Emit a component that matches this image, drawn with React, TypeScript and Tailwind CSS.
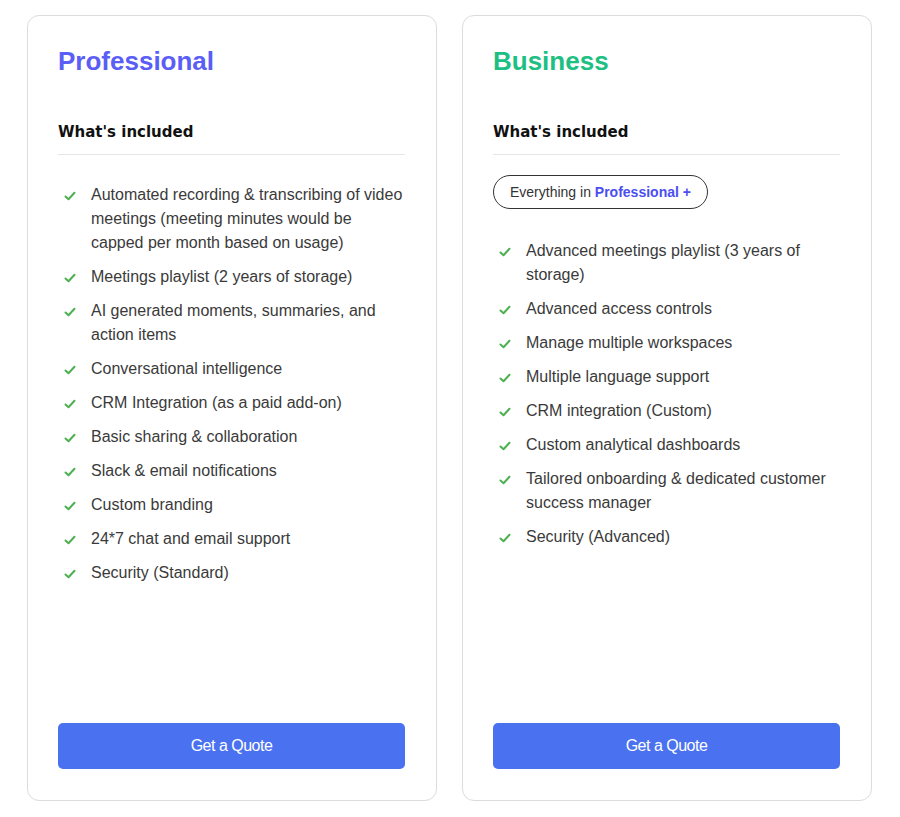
const proFeatures = [
  "Automated recording & transcribing of video meetings (meeting minutes would be capped per month based on usage)",
  "Meetings playlist (2 years of storage)",
  "AI generated moments, summaries, and action items",
  "Conversational intelligence",
  "CRM Integration (as a paid add-on)",
  "Basic sharing & collaboration",
  "Slack & email notifications",
  "Custom branding",
  "24*7 chat and email support",
  "Security (Standard)",
];

const bizFeatures = [
  "Advanced meetings playlist (3 years of storage)",
  "Advanced access controls",
  "Manage multiple workspaces",
  "Multiple language support",
  "CRM integration (Custom)",
  "Custom analytical dashboards",
  "Tailored onboarding & dedicated customer success manager",
  "Security (Advanced)",
];

function Check() {
  return (
    <svg width="12" height="10" viewBox="0 0 12 10" className="mt-[8px] shrink-0">
      <path d="M1.5 5.5 L4.5 8.2 L10.5 1.8" fill="none" stroke="#4caf50" strokeWidth="2" strokeLinecap="round" strokeLinejoin="round" />
    </svg>
  );
}

function FeatureList({ items, className }: { items: string[]; className?: string }) {
  return (
    <ul className={`flex flex-col gap-[10px] ${className ?? ""}`}>
      {items.map((t) => (
        <li key={t} className="flex gap-[15px] pl-[6px]">
          <Check />
          <span className="text-[16px] leading-[24px] text-[#3a3a3a]">{t}</span>
        </li>
      ))}
    </ul>
  );
}

function PlanCard({
  title,
  titleColor,
  children,
}: {
  title: string;
  titleColor: string;
  children: React.ReactNode;
}) {
  return (
    <div className="flex flex-col rounded-[12px] border border-[#dcdcdc] bg-white pl-[30px] pr-[31px] pt-[29px] pb-[31px]">
      <h2 className={`text-[26px] leading-[32px] font-bold ${titleColor}`}>{title}</h2>
      <div className="mt-[45px] border-b border-[#e6e6e6] pb-[12px]">
        <h3 className="text-[15px] leading-[20px] font-bold text-[#111]" style={{ fontFamily: '"DejaVu Sans", sans-serif' }}>
          What's included
        </h3>
      </div>
      <div className="flex-1">{children}</div>
      <button className="h-[46px] w-full rounded-[5px] bg-[#4a72f0] text-[16px] tracking-[-0.5px] text-white">
        Get a Quote
      </button>
    </div>
  );
}

export default function App() {
  return (
    <main
      className="min-h-screen bg-white"
      style={{ fontFamily: '"Liberation Sans", Arial, sans-serif' }}
    >
      <div className="grid h-[817px] grid-cols-2 gap-[25px] pt-[15px] pb-[16px] pl-[27px] pr-[28px]">
        <PlanCard title="Professional" titleColor="text-[#5b5ef5]">
          <FeatureList items={proFeatures} className="mt-[28px]" />
        </PlanCard>
        <PlanCard title="Business" titleColor="text-[#1dbf82]">
          <div className="mt-[20px] inline-flex h-[34px] items-center rounded-full border-[1.5px] border-[#333] px-[16px] text-[14px] text-[#333]">
            Everything in&nbsp;<span className="font-bold text-[#4b4ef0]">Professional +</span>
          </div>
          <FeatureList items={bizFeatures} className="mt-[30px]" />
        </PlanCard>
      </div>
    </main>
  );
}
